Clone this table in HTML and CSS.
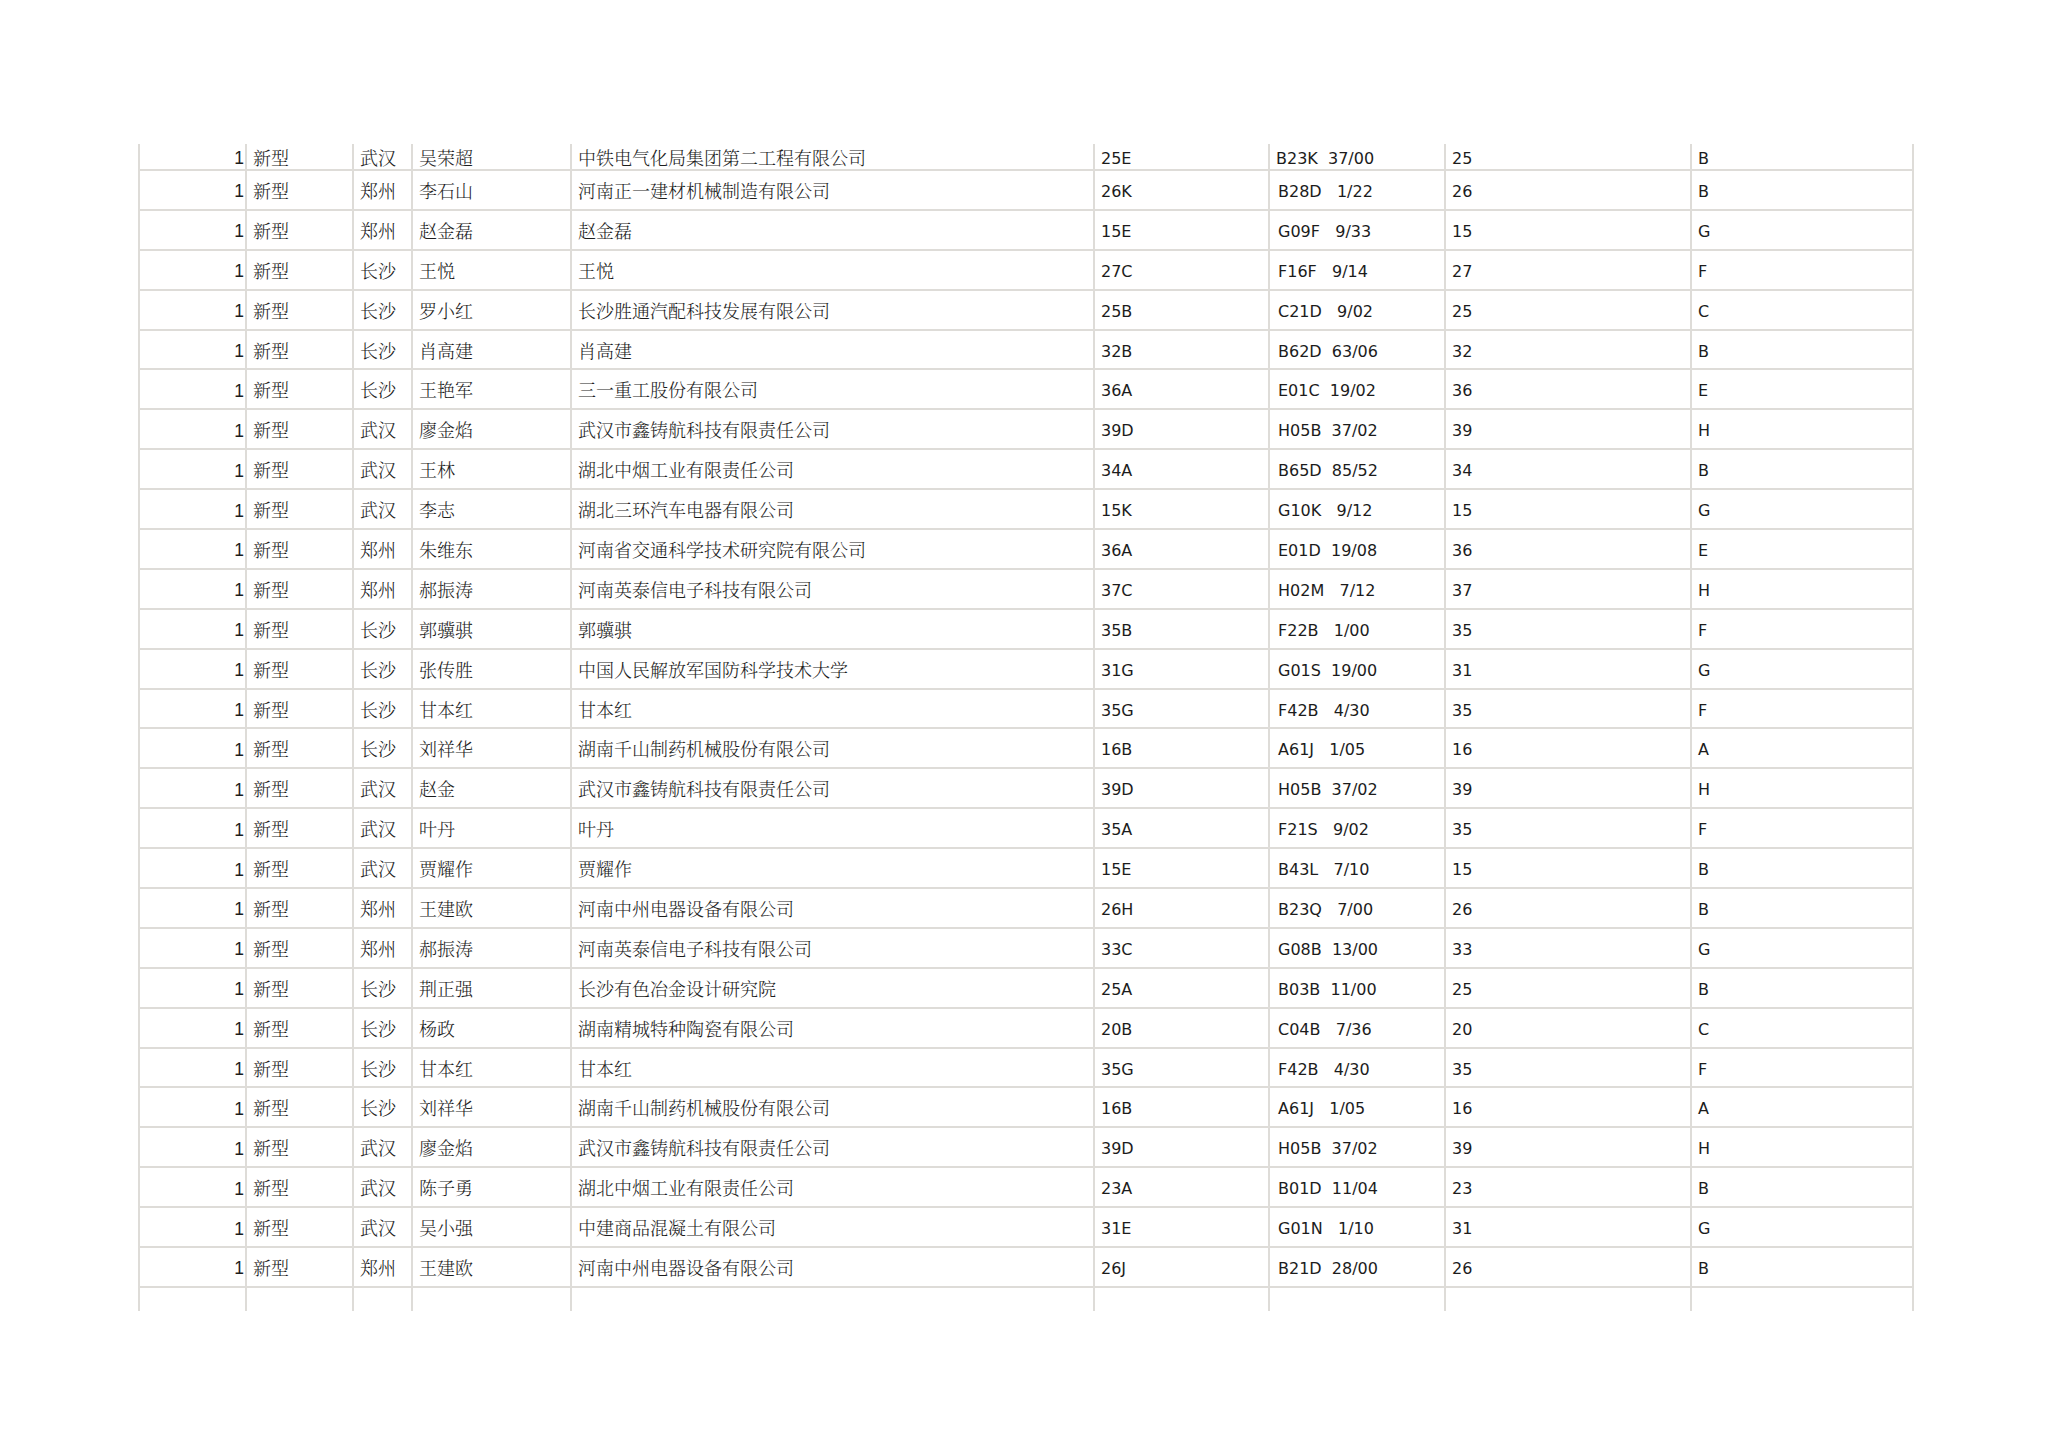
FILE: index.html
```html
<!DOCTYPE html>
<html lang="zh-CN">
<head>
<meta charset="utf-8">
<title>专利列表</title>
<link rel="stylesheet" href="styles.css">
</head>
<body>
<div class="page">
<table class="sheet">
<tbody>
<tr class="r first"><td class="c1 n">1</td><td class="c2 z">新型</td><td class="c3 z">武汉</td><td class="c4 z">吴荣超</td><td class="c5 z">中铁电气化局集团第二工程有限公司</td><td class="c6 l">25E</td><td class="c7 l">B23K  37/00</td><td class="c8 l">25</td><td class="c9 l">B</td></tr>
<tr class="r"><td class="n">1</td><td class="z">新型</td><td class="z">郑州</td><td class="z">李石山</td><td class="z">河南正一建材机械制造有限公司</td><td class="l">26K</td><td class="l k">B28D   1/22</td><td class="l">26</td><td class="l">B</td></tr>
<tr class="r"><td class="n">1</td><td class="z">新型</td><td class="z">郑州</td><td class="z">赵金磊</td><td class="z">赵金磊</td><td class="l">15E</td><td class="l k">G09F   9/33</td><td class="l">15</td><td class="l">G</td></tr>
<tr class="r"><td class="n">1</td><td class="z">新型</td><td class="z">长沙</td><td class="z">王悦</td><td class="z">王悦</td><td class="l">27C</td><td class="l k">F16F   9/14</td><td class="l">27</td><td class="l">F</td></tr>
<tr class="r"><td class="n">1</td><td class="z">新型</td><td class="z">长沙</td><td class="z">罗小红</td><td class="z">长沙胜通汽配科技发展有限公司</td><td class="l">25B</td><td class="l k">C21D   9/02</td><td class="l">25</td><td class="l">C</td></tr>
<tr class="r"><td class="n">1</td><td class="z">新型</td><td class="z">长沙</td><td class="z">肖高建</td><td class="z">肖高建</td><td class="l">32B</td><td class="l k">B62D  63/06</td><td class="l">32</td><td class="l">B</td></tr>
<tr class="r"><td class="n">1</td><td class="z">新型</td><td class="z">长沙</td><td class="z">王艳军</td><td class="z">三一重工股份有限公司</td><td class="l">36A</td><td class="l k">E01C  19/02</td><td class="l">36</td><td class="l">E</td></tr>
<tr class="r"><td class="n">1</td><td class="z">新型</td><td class="z">武汉</td><td class="z">廖金焰</td><td class="z">武汉市鑫铸航科技有限责任公司</td><td class="l">39D</td><td class="l k">H05B  37/02</td><td class="l">39</td><td class="l">H</td></tr>
<tr class="r"><td class="n">1</td><td class="z">新型</td><td class="z">武汉</td><td class="z">王林</td><td class="z">湖北中烟工业有限责任公司</td><td class="l">34A</td><td class="l k">B65D  85/52</td><td class="l">34</td><td class="l">B</td></tr>
<tr class="r"><td class="n">1</td><td class="z">新型</td><td class="z">武汉</td><td class="z">李志</td><td class="z">湖北三环汽车电器有限公司</td><td class="l">15K</td><td class="l k">G10K   9/12</td><td class="l">15</td><td class="l">G</td></tr>
<tr class="r"><td class="n">1</td><td class="z">新型</td><td class="z">郑州</td><td class="z">朱维东</td><td class="z">河南省交通科学技术研究院有限公司</td><td class="l">36A</td><td class="l k">E01D  19/08</td><td class="l">36</td><td class="l">E</td></tr>
<tr class="r"><td class="n">1</td><td class="z">新型</td><td class="z">郑州</td><td class="z">郝振涛</td><td class="z">河南英泰信电子科技有限公司</td><td class="l">37C</td><td class="l k">H02M   7/12</td><td class="l">37</td><td class="l">H</td></tr>
<tr class="r"><td class="n">1</td><td class="z">新型</td><td class="z">长沙</td><td class="z">郭骥骐</td><td class="z">郭骥骐</td><td class="l">35B</td><td class="l k">F22B   1/00</td><td class="l">35</td><td class="l">F</td></tr>
<tr class="r"><td class="n">1</td><td class="z">新型</td><td class="z">长沙</td><td class="z">张传胜</td><td class="z">中国人民解放军国防科学技术大学</td><td class="l">31G</td><td class="l k">G01S  19/00</td><td class="l">31</td><td class="l">G</td></tr>
<tr class="r"><td class="n">1</td><td class="z">新型</td><td class="z">长沙</td><td class="z">甘本红</td><td class="z">甘本红</td><td class="l">35G</td><td class="l k">F42B   4/30</td><td class="l">35</td><td class="l">F</td></tr>
<tr class="r"><td class="n">1</td><td class="z">新型</td><td class="z">长沙</td><td class="z">刘祥华</td><td class="z">湖南千山制药机械股份有限公司</td><td class="l">16B</td><td class="l k">A61J   1/05</td><td class="l">16</td><td class="l">A</td></tr>
<tr class="r"><td class="n">1</td><td class="z">新型</td><td class="z">武汉</td><td class="z">赵金</td><td class="z">武汉市鑫铸航科技有限责任公司</td><td class="l">39D</td><td class="l k">H05B  37/02</td><td class="l">39</td><td class="l">H</td></tr>
<tr class="r"><td class="n">1</td><td class="z">新型</td><td class="z">武汉</td><td class="z">叶丹</td><td class="z">叶丹</td><td class="l">35A</td><td class="l k">F21S   9/02</td><td class="l">35</td><td class="l">F</td></tr>
<tr class="r"><td class="n">1</td><td class="z">新型</td><td class="z">武汉</td><td class="z">贾耀作</td><td class="z">贾耀作</td><td class="l">15E</td><td class="l k">B43L   7/10</td><td class="l">15</td><td class="l">B</td></tr>
<tr class="r"><td class="n">1</td><td class="z">新型</td><td class="z">郑州</td><td class="z">王建欧</td><td class="z">河南中州电器设备有限公司</td><td class="l">26H</td><td class="l k">B23Q   7/00</td><td class="l">26</td><td class="l">B</td></tr>
<tr class="r"><td class="n">1</td><td class="z">新型</td><td class="z">郑州</td><td class="z">郝振涛</td><td class="z">河南英泰信电子科技有限公司</td><td class="l">33C</td><td class="l k">G08B  13/00</td><td class="l">33</td><td class="l">G</td></tr>
<tr class="r"><td class="n">1</td><td class="z">新型</td><td class="z">长沙</td><td class="z">荆正强</td><td class="z">长沙有色冶金设计研究院</td><td class="l">25A</td><td class="l k">B03B  11/00</td><td class="l">25</td><td class="l">B</td></tr>
<tr class="r"><td class="n">1</td><td class="z">新型</td><td class="z">长沙</td><td class="z">杨政</td><td class="z">湖南精城特种陶瓷有限公司</td><td class="l">20B</td><td class="l k">C04B   7/36</td><td class="l">20</td><td class="l">C</td></tr>
<tr class="r"><td class="n">1</td><td class="z">新型</td><td class="z">长沙</td><td class="z">甘本红</td><td class="z">甘本红</td><td class="l">35G</td><td class="l k">F42B   4/30</td><td class="l">35</td><td class="l">F</td></tr>
<tr class="r"><td class="n">1</td><td class="z">新型</td><td class="z">长沙</td><td class="z">刘祥华</td><td class="z">湖南千山制药机械股份有限公司</td><td class="l">16B</td><td class="l k">A61J   1/05</td><td class="l">16</td><td class="l">A</td></tr>
<tr class="r"><td class="n">1</td><td class="z">新型</td><td class="z">武汉</td><td class="z">廖金焰</td><td class="z">武汉市鑫铸航科技有限责任公司</td><td class="l">39D</td><td class="l k">H05B  37/02</td><td class="l">39</td><td class="l">H</td></tr>
<tr class="r"><td class="n">1</td><td class="z">新型</td><td class="z">武汉</td><td class="z">陈子勇</td><td class="z">湖北中烟工业有限责任公司</td><td class="l">23A</td><td class="l k">B01D  11/04</td><td class="l">23</td><td class="l">B</td></tr>
<tr class="r"><td class="n">1</td><td class="z">新型</td><td class="z">武汉</td><td class="z">吴小强</td><td class="z">中建商品混凝土有限公司</td><td class="l">31E</td><td class="l k">G01N   1/10</td><td class="l">31</td><td class="l">G</td></tr>
<tr class="r"><td class="n">1</td><td class="z">新型</td><td class="z">郑州</td><td class="z">王建欧</td><td class="z">河南中州电器设备有限公司</td><td class="l">26J</td><td class="l k">B21D  28/00</td><td class="l">26</td><td class="l">B</td></tr>
<tr class="r last"><td></td><td></td><td></td><td></td><td></td><td></td><td></td><td></td><td></td></tr>
</tbody>
</table>
</div>
</body>
</html>
```

FILE: styles.css
```css
html, body {
  margin: 0;
  padding: 0;
  background: #ffffff;
}

.page {
  padding: 144px 0 0 138px;
}

.sheet {
  table-layout: fixed;
  width: 1776px;
  border-collapse: separate;
  border-spacing: 0;
}

.sheet td {
  box-sizing: border-box;
  border-right: 2px solid #dedcd8;
  border-bottom: 2px solid #dedcd8;
  padding: 0 6px;
  vertical-align: middle;
  white-space: pre;
  overflow: hidden;
  color: #1c1c1c;
  line-height: 20px;
}

.sheet td:first-child {
  border-left: 2px solid #dedcd8;
}

.r { height: 39.9px; }
.r.first { height: 27px; }
.r.last { height: 23px; }
.r.last td { border-bottom: none; }

.c1 { width: 109px; }
.c2 { width: 107px; }
.c3 { width: 59px; }
.c4 { width: 159px; }
.c5 { width: 523px; }
.c6 { width: 175px; }
.c7 { width: 176px; }
.c8 { width: 246px; }
.c9 { width: 222px; }

.n {
  text-align: right;
  padding-right: 1px !important;
  padding-top: 3px !important;
  font-family: "Liberation Sans", Arial, sans-serif;
  font-size: 17.5px;
}

.z {
  font-family: "Noto Serif CJK SC", "Noto Sans CJK SC", "Noto Sans", serif;
  font-weight: 300;
  font-size: 18px;
  color: #2e2e2e;
}

.l {
  font-family: "DejaVu Sans", Verdana, sans-serif;
  font-size: 16px;
  color: #2a2a2a;
  padding-top: 4px !important;
}

.k {
  padding-left: 8px !important;
}
```
